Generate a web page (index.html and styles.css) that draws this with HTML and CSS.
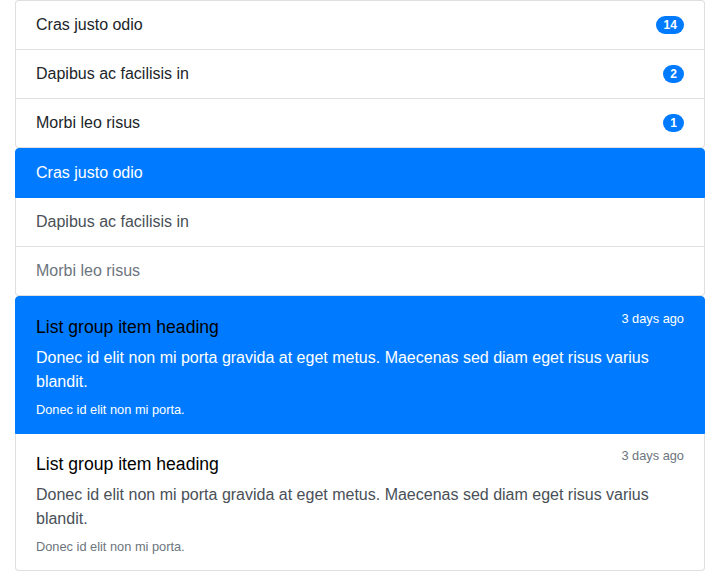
FILE: index.html
```html
<!DOCTYPE html>
<html lang="en">
<head>
<meta charset="utf-8">
<title>List groups</title>
<link rel="stylesheet" href="styles.css">
</head>
<body>
<div class="container">
  <ul class="list-group">
    <li class="list-group-item row-between">Cras justo odio <span class="badge">14</span></li>
    <li class="list-group-item row-between">Dapibus ac facilisis in <span class="badge">2</span></li>
    <li class="list-group-item row-between">Morbi leo risus <span class="badge">1</span></li>
  </ul>
  <div class="list-group">
    <a href="#" class="list-group-item action active">Cras justo odio</a>
    <a href="#" class="list-group-item action">Dapibus ac facilisis in</a>
    <a href="#" class="list-group-item action disabled">Morbi leo risus</a>
  </div>
  <div class="list-group">
    <a href="#" class="list-group-item action active">
      <div class="item-head">
        <h5 class="heading">List group item heading</h5>
        <small>3 days ago</small>
      </div>
      <p class="body-text">Donec id elit non mi porta gravida at eget metus. Maecenas sed diam eget risus varius blandit.</p>
      <small class="note">Donec id elit non mi porta.</small>
    </a>
    <a href="#" class="list-group-item action">
      <div class="item-head">
        <h5 class="heading">List group item heading</h5>
        <small class="muted">3 days ago</small>
      </div>
      <p class="body-text">Donec id elit non mi porta gravida at eget metus. Maecenas sed diam eget risus varius blandit.</p>
      <small class="note muted">Donec id elit non mi porta.</small>
    </a>
  </div>
</div>
</body>
</html>
```

FILE: styles.css
```css
* { box-sizing: border-box; }
html, body {
  margin: 0;
  background: #fff;
}
body {
  font-family: "Liberation Sans", Arial, sans-serif;
  font-size: 16px;
  line-height: 1.5;
  color: #212529;
}
.container {
  padding: 0 15px;
}
.list-group {
  display: flex;
  flex-direction: column;
  margin: 0;
  padding: 0;
  list-style: none;
}
.list-group-item {
  position: relative;
  display: block;
  padding: 12px 20px;
  margin-bottom: -1px;
  background: #fff;
  border: 1px solid rgba(0, 0, 0, 0.125);
  text-decoration: none;
}
.list-group-item:first-child {
  border-top-left-radius: 4px;
  border-top-right-radius: 4px;
}
.list-group-item:last-child {
  margin-bottom: 0;
  border-bottom-left-radius: 4px;
  border-bottom-right-radius: 4px;
}
.row-between {
  display: flex;
  justify-content: space-between;
  align-items: center;
}
.badge {
  display: inline-block;
  padding: 3px 7.2px;
  font-size: 12px;
  font-weight: 700;
  line-height: 1;
  color: #fff;
  background: #007bff;
  border-radius: 160px;
  text-align: center;
}
.action {
  color: #495057;
}
.action.active {
  z-index: 2;
  color: #fff;
  background: #007bff;
  border-color: #007bff;
}
.action.disabled {
  color: #6c757d;
}
.item-head {
  display: flex;
  justify-content: space-between;
  align-items: flex-start;
}
.heading {
  margin: 0 0 5px;
  padding-top: 4px;
  font-size: 17.6px;
  font-weight: 400;
  line-height: 28px;
  color: #000;
}
.item-head small {
  font-size: 12.8px;
  line-height: 19.2px;
}
.body-text {
  margin: 0 0 4px;
}
.note {
  display: block;
  font-size: 12.8px;
  line-height: 23px;
}
.muted {
  color: #6c757d;
}
```
